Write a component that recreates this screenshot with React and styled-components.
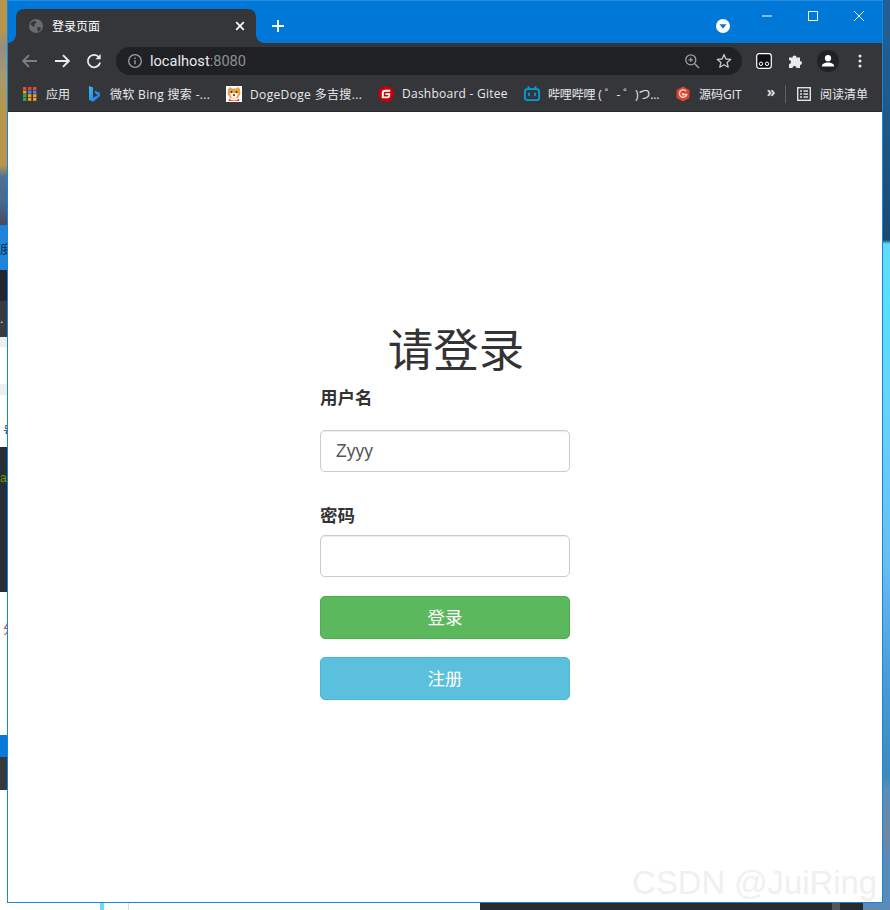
import React from "react";
import styled, { createGlobalStyle } from "styled-components";

const UI = `"Open Sans", "Noto Sans CJK SC", sans-serif`;
const PAGE = `"Liberation Sans", "Noto Sans CJK SC", sans-serif`;

const Global = createGlobalStyle`
  html, body { margin: 0; padding: 0; background: #fff; }
  * { box-sizing: border-box; }
`;

const Desktop = styled.div`
  width: 890px; height: 910px; overflow: hidden;
  display: grid; grid-template-columns: 7px 876px 7px; grid-template-rows: 903px 7px;
  font-family: ${UI};
`;
const LeftStrip = styled.div`
  grid-row: 1 / 3; grid-column: 1; display: flex; flex-direction: column; overflow: hidden; background: #fff;
`;
const StripBand = styled.div`
  flex: none; height: ${p => p.$h}px; background: ${p => p.$bg}; overflow: hidden;
  font-size: 12px; line-height: 16px; white-space: nowrap;
  padding: ${p => p.$top || 0}px 0 0 ${p => p.$pad || 0}px;
  color: ${p => p.$fg || "#222"}; font-family: ${PAGE};
`;
const RightStrip = styled.div`
  grid-row: 1 / 3; grid-column: 3;
  background: linear-gradient(180deg, #215f97 0, #1f5a8a 100px, #1c4a6f 240px, #5fdcfa 244px, #55e0fc 300px, #66d4fb 410px, #69bdf1 565px, #4d9fd8 668px, #3e88bc 775px, #5b8dbb 790px, #70869f 835px, #5a8ab8 860px, #5a8ab8 910px);
`;
const BottomStrip = styled.div`
  grid-row: 2; grid-column: 2; display: flex;
`;
const BottomBand = styled.div`
  flex: none; width: ${p => p.$w}px; background: ${p => p.$bg};
`;

const Window = styled.div`
  grid-row: 1; grid-column: 2; position: relative; display: flex; flex-direction: column;
  border: 1px solid #1685de; border-top-color: #2a8de0; background: #fff; overflow: hidden;
`;
const TitleBar = styled.div`
  flex: none; height: 42px; background: #0078d7; display: flex; align-items: flex-end; padding-left: 8px;
`;
const Tab = styled.div`
  position: relative; width: 240px; height: 34px; background: #35363a; border-radius: 8px 8px 0 0;
  display: flex; align-items: center; padding: 0 11px 0 13px; color: #fff; font-size: 12px;
  &::before, &::after {
    content: ""; position: absolute; bottom: 0; width: 8px; height: 8px;
    background: radial-gradient(circle at var(--c) 0, #0078d7 7.5px, #35363a 8px);
  }
  &::before { left: -8px; --c: 0; }
  &::after { right: -8px; --c: 100%; }
`;
const TabTitle = styled.span`
  margin-left: 9px; flex: 1; line-height: 16px; padding-top: 1px;
`;
const NewTab = styled.div`
  margin-left: 14px; width: 16px; height: 34px; display: flex; align-items: center; justify-content: center;
`;
const Spacer = styled.div`flex: 1;`;
const ProfileDrop = styled.div`
  width: 14px; height: 34px; margin-right: 14px; display: flex; align-items: center;
`;
const WinControls = styled.div`
  align-self: flex-start; display: flex; height: 30px;
`;
const WinBtn = styled.div`
  width: 46px; height: 30px; display: flex; align-items: center; justify-content: center;
`;

const Toolbar = styled.div`
  flex: none; height: 32px; background: #35363a; display: flex; align-items: center; padding: 4px 0 0 14px;
`;
const NavBtn = styled.div`
  width: 16px; height: 16px; margin-right: 16px; display: flex;
`;
const Omnibox = styled.div`
  width: 626px; height: 28px; margin-left: -2px; background: #202124; border-radius: 14px; display: flex; align-items: center; padding: 0 10px 0 11px;
`;
const Url = styled.div`
  margin-left: 7px; flex: 1; font-size: 14.6px; color: #e8eaed; line-height: 18px; font-family: "Roboto", "Open Sans", sans-serif;
`;
const UrlPort = styled.span`color: #8d9093;`;
const OmniIcon = styled.div`
  width: 16px; height: 16px; margin-left: ${p => p.$ml || 0}px; display: flex;
`;
const ToolIcon = styled.div`
  width: ${p => p.$w || 16}px; height: ${p => p.$w || 16}px; margin-left: ${p => p.$ml}px; display: flex;
`;

const Bookmarks = styled.div`
  flex: none; height: 37px; background: #35363a; border-bottom: 1px solid #27282b;
  display: flex; align-items: center; padding: 1px 0 0 14px; color: #e8eaed; font-size: 12px;
`;
const Bookmark = styled.div`
  flex: none; width: ${p => p.$w}px; display: flex; align-items: center; gap: 8px; white-space: nowrap;
`;
const BmLabel = styled.span`
  letter-spacing: ${p => p.$ls || 0}px;
`;
const BmIcon = styled.div`
  flex: none; width: 16px; height: 16px; display: flex;
`;
const BmMore = styled.div`
  flex: none; width: 14px; color: #dfe1e5; font-size: 14px; font-weight: 700; line-height: 16px; text-align: center; margin-top: -3px;
`;
const BmDivider = styled.div`
  flex: none; width: 1px; height: 18px; background: #5f6368; margin: 0 10px 0 7px;
`;

const Page = styled.div`
  flex: 1; position: relative; background: #fff; font-family: ${PAGE}; color: #333; padding: 215px 0 0 312px;
`;
const Form = styled.form`
  width: 250px; margin: 0; display: flex; flex-direction: column;
`;
const Heading = styled.h1`
  margin: 0 0 9px -3px; width: 278px; text-align: center; font-size: 45.5px; font-weight: 400; line-height: 50px; white-space: nowrap; height: 50px;
`;
const Label = styled.label`
  display: block; font-weight: 700; font-size: 17.5px; line-height: 25px; height: 25px; margin-bottom: ${p => p.$mb}px;
`;
const Input = styled.input`
  display: block; width: 250px; height: 42px; border: 1px solid #ccc; border-radius: 5px; padding: 0 15px;
  font-family: ${PAGE}; font-size: 17.5px; color: #555; background: #fff; outline: 0;
  box-shadow: inset 0 1px 1px rgba(0,0,0,.075); margin-bottom: ${p => p.$mb}px;
`;
const Button = styled.button`
  display: block; width: 250px; height: 43px; border-radius: 5px; border: 1px solid ${p => p.$border}; background: ${p => p.$bg};
  color: #fff; font-family: ${PAGE}; font-size: 17.5px; padding: 0 0 3px; margin-bottom: ${p => p.$mb || 0}px;
`;
const Watermark = styled.div`
  position: absolute; right: 5px; bottom: 0; font-family: "Liberation Sans", sans-serif; font-size: 32.8px; line-height: 38px; color: #f0f0f0; white-space: nowrap;
`;

const S = ({ children, size = 16, vb = "0 0 16 16" }) => (
  <svg width={size} height={size} viewBox={vb} fill="none">{children}</svg>
);

const Globe = () => (
  <S size={14}>
    <circle cx="8" cy="8" r="8" fill="#6b6c70" />
    <path d="M3 3.5 7 2l1.5 2L6 6.5 6.5 9 4 8 1.5 6zM9.5 9l3.5.5.5 2.5-3 2.5-1-2.5z" fill="#35363a" />
  </S>
);
const ArrowSvg = styled.svg`
  transform: ${p => (p.$flip ? "scaleX(-1)" : "none")};
`;
const Arrow = ({ color, flip }) => (
  <ArrowSvg width="16" height="16" viewBox="0 0 16 16" $flip={flip} fill="none">
    <path d="M1 8h13.5M9 2.2 14.8 8 9 13.8" stroke={color} strokeWidth="1.9" />
  </ArrowSvg>
);

const Apps = () => {
  const rows = [["#e8453c", "#db4437", "#e8453c"], ["#f0a020", "#4285f4", "#4285f4"], ["#34a853", "#f0a020", "#f0a020"], ["#34a853", "#f0a020", "#f0a020"]];
  return (
    <S>
      {rows.map((r, y) => r.map((c, x) => <rect key={`${x}-${y}`} x={1 + x * 5} y={1 + y * 3.6} width="3.4" height="3" fill={c} />))}
    </S>
  );
};
const Bing = () => (
  <S>
    <defs>
      <linearGradient id="bg" x1="0" y1="0" x2="1" y2="1">
        <stop offset="0" stopColor="#37bdf8" /><stop offset="1" stopColor="#1a6fe0" />
      </linearGradient>
    </defs>
    <path d="M3 0l4 1.4v10.4l5-2.8-2.3-1L8.4 4.700 14 6.800v3.300L7 15.900 3 13.800z" fill="url(#bg)" />
  </S>
);
const Doge = () => (
  <S>
    <rect width="16" height="16" fill="#fff" />
    <path d="M2 3 4 1l2 1.500h4L12 1l2 2 .5 5-3 4.500h-7L1.500 8z" fill="#e8a24a" />
    <path d="M4 8c1-2 2.500-1.500 4-1s3-1 4 1l-2 4.500H6z" fill="#fff4e0" />
    <circle cx="5.500" cy="6" r=".9" fill="#3a2a1a" /><circle cx="10.500" cy="6" r=".9" fill="#3a2a1a" />
    <circle cx="8" cy="9" r="1" fill="#3a2a1a" />
    <path d="M3 12.500c2 2.500 8 2.500 10 0l.5 2.500h-11z" fill="#e5424d" />
  </S>
);
const Gitee = () => (
  <S>
    <circle cx="8" cy="8" r="8" fill="#c7000b" />
    <path d="M12.200 3.800H7A3.200 3.200 0 0 0 3.800 7v5.200h5.400A3 3 0 0 0 12.200 9.200V7.300H7.300v1.800h3v.3a1 1 0 0 1-1 1H5.800V7.100C5.800 6.300 6.400 5.700 7.200 5.700h5z" fill="#fff" />
  </S>
);
const Bili = () => (
  <S>
    <path d="M4 .800 6 3M12 .800 10 3" stroke="#00a1d6" strokeWidth="1.500" strokeLinecap="round" />
    <rect x=".900" y="3.200" width="14.200" height="11" rx="2.500" stroke="#00a1d6" strokeWidth="1.800" />
    <path d="M5 7.300v2M11 7.300v2" stroke="#00a1d6" strokeWidth="1.700" strokeLinecap="round" />
  </S>
);
const GitLogo = () => (
  <S>
    <path d="M8 .500 14.500 4v8L8 15.500 1.500 12V4z" fill="#d9432f" />
    <path d="M11 5.200A3.700 3.700 0 1 0 11.700 8.500H8" stroke="#f9d5c8" strokeWidth="1.500" />
    <circle cx="8" cy="8.200" r="1.200" fill="#f9d5c8" />
  </S>
);
const Reading = () => (
  <S>
    <rect x="1.700" y="1.700" width="12.600" height="12.600" stroke="#dfe1e5" strokeWidth="1.400" />
    <path d="M4 5h2M7.500 5H12M4 8h2M7.500 8H12M4 11h2M7.500 11H12" stroke="#dfe1e5" strokeWidth="1.300" />
  </S>
);

export default function App() {
  return (
    <>
      <Global />
      <Desktop>
        <LeftStrip>
          <StripBand $h={110} $bg="linear-gradient(180deg,#b8954a 0,#b8954a 30px,#8f8f84 48px,#a79a70 75px,#b8954a 110px)" />
          <StripBand $h={55} $bg="#b8954a" />
          <StripBand $h={60} $bg="linear-gradient(180deg,#b8954a 0,#4e7195 20%,#486a8c 60%,#4a4a60 100%)" />
          <StripBand $h={45} $bg="#1e84d8" $fg="#10243a" $top={17}>度</StripBand>
          <StripBand $h={31} $bg="#23262d" />
          <StripBand $h={36} $bg="#3a3b3d" $fg="#eee" $top={10}>.</StripBand>
          <StripBand $h={10} $bg="#eeeeee" />
          <StripBand $h={37} $bg="#ffffff" />
          <StripBand $h={11} $bg="#eeeeee" />
          <StripBand $h={52} $bg="#ffffff" $fg="#333" $pad={3} $top={29}>号</StripBand>
          <StripBand $h={145} $bg="#282c34" $fg="#6aa000" $top={23}>a</StripBand>
          <StripBand $h={143} $bg="#ffffff" $fg="#a04060" $pad={3} $top={30}>分</StripBand>
          <StripBand $h={22} $bg="#0a78d8" />
          <StripBand $h={33} $bg="#37383a" />
          <StripBand $h={120} $bg="#ffffff" />
        </LeftStrip>

        <Window>
          <TitleBar>
            <Tab>
              <Globe />
              <TabTitle>登录页面</TabTitle>
              <svg width="10" height="10" viewBox="0 0 10 10"><path d="M1.200 1.200l7.600 7.600M8.800 1.200 1.200 8.800" stroke="#fff" strokeWidth="1.700" /></svg>
            </Tab>
            <NewTab>
              <svg width="12" height="12" viewBox="0 0 12 12"><path d="M6 0v12M0 6h12" stroke="#fff" strokeWidth="1.800" /></svg>
            </NewTab>
            <Spacer />
            <ProfileDrop>
              <svg width="14" height="14" viewBox="0 0 14 14"><circle cx="7" cy="7" r="7" fill="#fff" /><path d="M3.500 5.200h7L7 9.800z" fill="#0078d7" /></svg>
            </ProfileDrop>
            <WinControls>
              <WinBtn><svg width="10" height="10" viewBox="0 0 10 10"><path d="M0 5h10" stroke="#fff" /></svg></WinBtn>
              <WinBtn><svg width="10" height="10" viewBox="0 0 10 10"><rect x=".5" y=".5" width="9" height="9" fill="none" stroke="#fff" /></svg></WinBtn>
              <WinBtn><svg width="10" height="10" viewBox="0 0 10 10"><path d="M0 0l10 10M10 0 0 10" stroke="#fff" /></svg></WinBtn>
            </WinControls>
          </TitleBar>

          <Toolbar>
            <NavBtn><Arrow color="#7d7f83" flip /></NavBtn>
            <NavBtn><Arrow color="#e8eaed" /></NavBtn>
            <NavBtn>
              <svg width="16" height="16" viewBox="0 0 16 16" fill="none">
                <path d="M13 4.300A6.200 6.200 0 1 0 14.100 9.500" stroke="#e8eaed" strokeWidth="1.800" />
                <path d="M9.500 6.300h5.200V1z" fill="#e8eaed" />
              </svg>
            </NavBtn>
            <Omnibox>
              <OmniIcon>
                <S>
                  <circle cx="8" cy="8" r="6.300" stroke="#9aa0a6" strokeWidth="1.300" />
                  <path d="M8 7.200v4M8 4.600v1.400" stroke="#9aa0a6" strokeWidth="1.400" />
                </S>
              </OmniIcon>
              <Url>localhost<UrlPort>:8080</UrlPort></Url>
              <OmniIcon>
                <S>
                  <circle cx="6.800" cy="6.800" r="5" stroke="#9aa0a6" strokeWidth="1.300" />
                  <path d="M10.500 10.500 15 15" stroke="#9aa0a6" strokeWidth="1.500" />
                  <path d="M6.800 4.500v4.600M4.500 6.800h4.600" stroke="#9aa0a6" strokeWidth="1.200" />
                </S>
              </OmniIcon>
              <OmniIcon $ml={16}>
                <S><path d="M8 1.500 9.900 6l4.800.4-3.600 3.100 1.100 4.700L8 11.700l-4.200 2.500 1.100-4.700L1.300 6.400 6.100 6z" stroke="#c4c7c9" strokeWidth="1.300" strokeLinejoin="round" /></S>
              </OmniIcon>
            </Omnibox>
            <ToolIcon $ml={14}>
              <S>
                <rect x=".7" y=".7" width="14.600" height="14.600" rx="2.500" fill="#111" stroke="#fff" strokeWidth="1.200" />
                <circle cx="5" cy="10.800" r="1.700" stroke="#fff" strokeWidth="1" />
                <circle cx="11" cy="10.800" r="1.700" stroke="#fff" strokeWidth="1" />
              </S>
            </ToolIcon>
            <ToolIcon $ml={16}>
              <S><path d="M1 5h3.500a2 2 0 1 1 4 0H12v3.500a2 2 0 1 1 0 4V15.500H8.500a2 2 0 1 0-4 0H1V11.500a2 2 0 1 0 0-4z" fill="#e8eaed" transform="translate(0 -.5)" /></S>
            </ToolIcon>
            <ToolIcon $w={22} $ml={13}>
              <svg width="22" height="22" viewBox="0 0 22 22">
                <circle cx="11" cy="11" r="11" fill="#202124" />
                <circle cx="11" cy="8.200" r="3.100" fill="#fff" />
                <path d="M4.800 16.500c0-3 3.500-4 6.200-4s6.200 1 6.200 4z" fill="#fff" />
              </svg>
            </ToolIcon>
            <ToolIcon $ml={13}>
              <S><circle cx="8" cy="3" r="1.500" fill="#e8eaed" /><circle cx="8" cy="8" r="1.500" fill="#e8eaed" /><circle cx="8" cy="13" r="1.500" fill="#e8eaed" /></S>
            </ToolIcon>
          </Toolbar>

          <Bookmarks>
            <Bookmark $w={64}><BmIcon><Apps /></BmIcon><BmLabel>应用</BmLabel></Bookmark>
            <Bookmark $w={140}><BmIcon><Bing /></BmIcon><BmLabel $ls={0.33}>微软 Bing 搜索 -...</BmLabel></Bookmark>
            <Bookmark $w={152}><BmIcon><Doge /></BmIcon><BmLabel $ls={0.35}>DogeDoge 多吉搜...</BmLabel></Bookmark>
            <Bookmark $w={146}><BmIcon><Gitee /></BmIcon><BmLabel $ls={0.25}>Dashboard - Gitee</BmLabel></Bookmark>
            <Bookmark $w={151}><BmIcon><Bili /></BmIcon><BmLabel $ls={-0.15}>哔哩哔哩 ( ゜- ゜)つ...</BmLabel></Bookmark>
            <Bookmark $w={89}><BmIcon><GitLogo /></BmIcon><BmLabel>源码GIT</BmLabel></Bookmark>
            <BmMore>»</BmMore>
            <BmDivider />
            <Bookmark $w={72}><BmIcon><Reading /></BmIcon><BmLabel>阅读清单</BmLabel></Bookmark>
          </Bookmarks>

          <Page>
            <Form onSubmit={e => e.preventDefault()}>
              <Heading>请登录</Heading>
              <Label $mb={19}>用户名</Label>
              <Input $mb={31.5} defaultValue="Zyyy" />
              <Label $mb={6.5}>密码</Label>
              <Input $mb={19} />
              <Button type="button" $bg="#5cb85c" $border="#4cae4c" $mb={18}>登录</Button>
              <Button type="button" $bg="#5bc0de" $border="#46b8da">注册</Button>
            </Form>
            <Watermark>CSDN @JuiRing</Watermark>
          </Page>
        </Window>

        <RightStrip />
        <BottomStrip>
          <BottomBand $w={93} $bg="#fff" />
          <BottomBand $w={4} $bg="#5ce0fc" />
          <BottomBand $w={24} $bg="#fff" />
          <BottomBand $w={1} $bg="#ddd" />
          <BottomBand $w={351} $bg="#fff" />
          <BottomBand $w={352} $bg="#2a2a2a" />
          <BottomBand $w={8} $bg="#555" />
          <BottomBand $w={23} $bg="#2a2a2a" />
          <BottomBand $w={20} $bg="#5a8ab8" />
        </BottomStrip>
      </Desktop>
    </>
  );
}
